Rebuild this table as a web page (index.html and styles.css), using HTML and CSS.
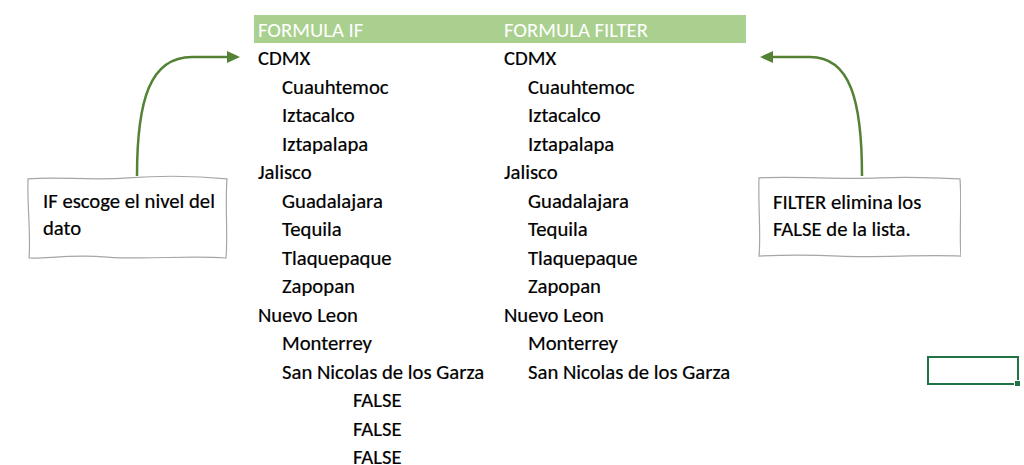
FILE: index.html
```html
<!DOCTYPE html>
<html lang="es">
<head>
<meta charset="utf-8">
<link rel="stylesheet" href="styles.css">
</head>
<body>
<div class="sheet">
  <div class="side side-left">
    <div class="note note-left">
      <svg class="note-bg" viewBox="0 0 200 86" preserveAspectRatio="none"><path d="M1 4 C 30 1, 60 6, 100 3 S 170 1, 199 4 C 197 30, 200 60, 198 84 C 160 81, 120 86, 80 83 S 20 85, 2 84 C 4 60, 0 30, 1 4 Z" fill="#fff" stroke="#a6a6a6" stroke-width="1.2" vector-effect="non-scaling-stroke"/></svg>
      <p>IF escoge el nivel del dato</p>
    </div>
  </div>
  <div class="table">
    <div class="row head"><span class="cell">FORMULA IF</span><span class="cell">FORMULA FILTER</span></div>
    <div class="row"><span class="cell">CDMX</span><span class="cell">CDMX</span></div>
    <div class="row"><span class="cell l2">Cuauhtemoc</span><span class="cell l2">Cuauhtemoc</span></div>
    <div class="row"><span class="cell l2">Iztacalco</span><span class="cell l2">Iztacalco</span></div>
    <div class="row"><span class="cell l2">Iztapalapa</span><span class="cell l2">Iztapalapa</span></div>
    <div class="row"><span class="cell">Jalisco</span><span class="cell">Jalisco</span></div>
    <div class="row"><span class="cell l2">Guadalajara</span><span class="cell l2">Guadalajara</span></div>
    <div class="row"><span class="cell l2">Tequila</span><span class="cell l2">Tequila</span></div>
    <div class="row"><span class="cell l2">Tlaquepaque</span><span class="cell l2">Tlaquepaque</span></div>
    <div class="row"><span class="cell l2">Zapopan</span><span class="cell l2">Zapopan</span></div>
    <div class="row"><span class="cell">Nuevo Leon</span><span class="cell">Nuevo Leon</span></div>
    <div class="row"><span class="cell l2">Monterrey</span><span class="cell l2">Monterrey</span></div>
    <div class="row"><span class="cell l2">San Nicolas de los Garza</span><span class="cell l2">San Nicolas de los Garza</span></div>
    <div class="row"><span class="cell l3">FALSE</span><span class="cell"></span></div>
    <div class="row"><span class="cell l3">FALSE</span><span class="cell"></span></div>
    <div class="row"><span class="cell l3">FALSE</span><span class="cell"></span></div>
  </div>
  <div class="side side-right">
    <div class="note note-right">
      <svg class="note-bg" viewBox="0 0 200 86" preserveAspectRatio="none"><path d="M1 2 C 40 0, 80 4, 120 2 S 180 3, 199 3 C 201 30, 198 60, 200 84 C 160 82, 120 86, 80 84 S 20 83, 1 84 C 3 60, 0 30, 1 2 Z" fill="#fff" stroke="#a6a6a6" stroke-width="1.2" vector-effect="non-scaling-stroke"/></svg>
      <p>FILTER elimina los FALSE de la lista.</p>
    </div>
    <div class="selected"><span class="handle"></span></div>
  </div>
  <svg class="arrows" width="1024" height="465" viewBox="0 0 1024 465">
    <path d="M137 176 C 137 100, 150 57, 192 57 L 229 57" fill="none" stroke="#548235" stroke-width="2.5"/>
    <polygon points="227,51 240,57 227,63" fill="#548235"/>
    <path d="M862 176 C 862 100, 850 57, 810 57 L 771 57" fill="none" stroke="#548235" stroke-width="2.5"/>
    <polygon points="773,51 760,57 773,63" fill="#548235"/>
  </svg>
</div>
</body>
</html>
```

FILE: styles.css
```css
html, body {
  margin: 0;
  padding: 0;
  background: #fff;
}
body {
  font-family: Carlito, Calibri, Lato, "Open Sans", sans-serif;
  font-size: 20.7px;
  color: #000;
  -webkit-text-stroke: 0.2px #000;
}
.sheet {
  position: relative;
  display: flex;
  width: 1024px;
  height: 465px;
  overflow: hidden;
  padding-top: 15px;
  box-sizing: border-box;
}
.side-left {
  width: 254px;
  flex-shrink: 0;
  padding-top: 160px;
  padding-left: 27px;
  box-sizing: border-box;
}
.table {
  width: 492px;
  flex-shrink: 0;
  display: flex;
  flex-direction: column;
}
.row {
  display: flex;
  flex-shrink: 0;
  height: 28.5px;
  align-items: center;
  padding-top: 3px;
  box-sizing: border-box;
}
.row.head {
  height: 28px;
  padding-top: 2px;
  background: #a9d08e;
  color: #fff;
  -webkit-text-stroke: 0;
}
.cell {
  width: 246px;
  padding-left: 4px;
  box-sizing: border-box;
  white-space: nowrap;
  line-height: 1;
}
.cell.l2 { padding-left: 28px; }
.cell.l3 { padding-left: 99px; }
.side-right {
  flex: 1;
  padding-top: 161px;
  padding-left: 12px;
  box-sizing: border-box;
}
.note {
  position: relative;
  width: 201px;
  height: 85px;
  box-sizing: border-box;
}
.note-right { height: 82px; width: 203px; }
.note-bg {
  position: absolute;
  inset: 0;
  width: 100%;
  height: 100%;
}
.note p {
  position: relative;
  margin: 0;
  padding: 13px 2px 0 16px;
  line-height: 27px;
}
.note-right p { padding-left: 15px; padding-right: 20px; }
.selected {
  position: relative;
  margin-top: 98px;
  margin-left: 169px;
  width: 92px;
  height: 29px;
  border: 2px solid #217346;
  box-sizing: border-box;
}
.handle {
  position: absolute;
  right: -4px;
  bottom: -4px;
  width: 5px;
  height: 5px;
  background: #217346;
  border: 1px solid #fff;
}
.arrows {
  position: absolute;
  left: 0;
  top: 0;
  pointer-events: none;
}
```
